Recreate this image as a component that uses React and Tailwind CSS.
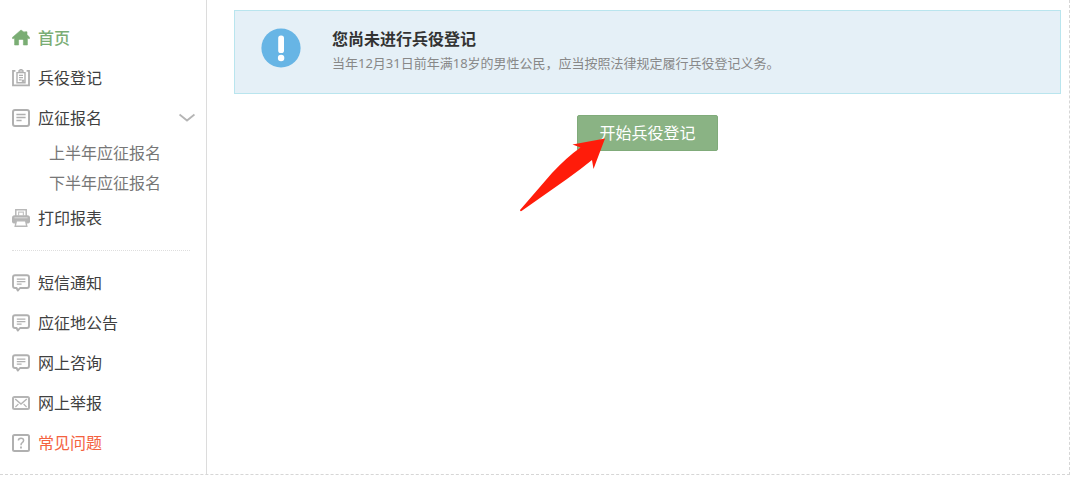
import { useState } from "react";

function HomeIcon() {
  return (
    <svg viewBox="0 0 18 18" className="w-[18px] h-[18px] shrink-0" aria-hidden="true">
      <path
        d="M9 1 L12.4 3.4 V2.8 H15 V5.6 L17.6 8.4 V9.6 H15.4 V16 H11.4 V11.4 Q11.4 10.4 10.4 10.4 H7.6 Q6.6 10.4 6.6 11.4 V16 H2.6 V9.6 H0.4 V8.4 Z"
        fill="#7aad74"
        stroke="#7aad74"
        strokeWidth="0.6"
        strokeLinejoin="round"
      />
    </svg>
  );
}

function RegisterIcon() {
  return (
    <svg viewBox="0 0 18 18" className="w-[18px] h-[18px] shrink-0" fill="none" stroke="#b0b0b0" aria-hidden="true">
      <path d="M3.4 1.8 H1 V16.4 H17 V1.8 H14.6" strokeWidth="1.8" />
      <path d="M5 3.6 H13 V13.8 H5 Z" strokeWidth="1.4" />
      <path d="M7 3.4 V1.6 Q9 -0.4 11 1.6 V3.4 Z" fill="#d4d4d4" strokeWidth="1.3" />
      <path d="M7 6.4 H11 M7 8.6 H11 M7 10.8 H9.6" strokeWidth="1.2" />
      <path d="M9.8 11.8 H12.4" strokeWidth="2.2" />
    </svg>
  );
}

function FormIcon() {
  return (
    <svg viewBox="0 0 18 18" className="w-[18px] h-[18px] shrink-0" fill="none" stroke="#b0b0b0" aria-hidden="true">
      <rect x="1" y="1" width="16" height="16" rx="2" strokeWidth="2" />
      <path d="M4.4 5.5 H13.6 M4.4 8.5 H13.6 M4.4 11.5 H9.6" strokeWidth="1.3" />
    </svg>
  );
}

function PrinterIcon() {
  return (
    <svg viewBox="0 0 18 18" className="w-[18px] h-[18px] shrink-0" fill="none" aria-hidden="true">
      <path d="M3.8 7 V0.8 H14.2 V7" fill="#fff" stroke="#b8b8b8" strokeWidth="1.5" />
      <path d="M6.6 6.4 V3.2 H11.4 V6.4" stroke="#c6c6c6" strokeWidth="1.2" />
      <path d="M2.6 6.2 H15.4 Q18 6.2 18 8.8 V12.6 Q18 14.6 16 14.6 H2 Q0 14.6 0 12.6 V8.8 Q0 6.2 2.6 6.2 Z" fill="#b5b5b5" />
      <path d="M2.4 8.8 H15.6" stroke="#dcdcdc" strokeWidth="1" />
      <path d="M4.4 11.8 H13.6 L14.8 17.2 H3.2 Z" fill="#fff" stroke="#b8b8b8" strokeWidth="1.4" />
    </svg>
  );
}

function MessageIcon() {
  return (
    <svg viewBox="0 0 18 18" className="w-[18px] h-[18px] shrink-0" fill="none" stroke="#b0b0b0" aria-hidden="true">
      <path
        d="M3 1.2 H15 Q17 1.2 17 3.2 V12 Q17 14 15 14 H8 L5.8 16.6 L4.6 14 H3 Q1 14 1 12 V3.2 Q1 1.2 3 1.2 Z"
        strokeWidth="1.9"
        strokeLinejoin="round"
      />
      <path d="M4.8 5.1 H13.4 M4.8 7.6 H13.4 M4.8 10.1 H9.6" strokeWidth="1.2" />
    </svg>
  );
}

function MailIcon() {
  return (
    <svg viewBox="0 0 18 18" className="w-[18px] h-[18px] shrink-0" fill="none" stroke="#b5b5b5" aria-hidden="true">
      <rect x="1" y="3" width="16" height="12" rx="1.5" strokeWidth="2" />
      <path d="M3.2 5 L9 10 L14.8 5" strokeWidth="1.5" />
      <path d="M3.4 13 L6.4 10 M14.6 13 L11.6 10" strokeWidth="1.1" />
    </svg>
  );
}

function QuestionIcon() {
  return (
    <svg viewBox="0 0 18 18" className="w-[18px] h-[18px] shrink-0" fill="none" stroke="#b0b0b0" aria-hidden="true">
      <rect x="1" y="1" width="16" height="16" rx="1.5" strokeWidth="2" />
      <path d="M6.4 6.6 Q6.4 4.2 9 4.2 Q11.6 4.2 11.6 6.4 Q11.6 7.6 10.2 8.6 Q9 9.4 9 11.2" strokeWidth="1.5" />
      <path d="M9 12.6 V14.6" strokeWidth="1.8" />
    </svg>
  );
}

function MenuLink({ icon: Icon, label, className = "text-[#404040]" }) {
  return (
    <a href="#" className={`flex h-10 items-center gap-2 pl-3 text-base ${className}`}>
      <Icon />
      {label}
    </a>
  );
}

const notices = [
  { label: "短信通知", icon: MessageIcon },
  { label: "应征地公告", icon: MessageIcon },
  { label: "网上咨询", icon: MessageIcon },
  { label: "网上举报", icon: MailIcon },
  { label: "常见问题", icon: QuestionIcon, className: "text-[#f4623f]" },
];

function Sidebar() {
  const [open, setOpen] = useState(true);

  return (
    <nav className="w-[207px] shrink-0 border-r border-[#dcdcdc] pt-[18px] pb-[11px]">
      <MenuLink icon={HomeIcon} label="首页" className="font-medium text-[#7aad74]" />
      <MenuLink icon={RegisterIcon} label="兵役登记" />
      <button
        type="button"
        aria-expanded={open}
        onClick={() => setOpen(!open)}
        className="flex h-10 w-full items-center gap-2 pl-3 pr-[11px] text-base text-[#404040]"
      >
        <FormIcon />
        应征报名
        <svg viewBox="0 0 16 10" className="ml-auto h-[10px] w-4" fill="none" aria-hidden="true">
          <path d="M0.5 1.5 L8 7.5 L15.5 1.5" stroke="#b5b5b5" strokeWidth="1.9" />
        </svg>
      </button>
      {open && (
        <div className="pl-[49px] text-base text-[#777]">
          <a href="#" className="flex h-[30px] items-center">上半年应征报名</a>
          <a href="#" className="flex h-[30px] items-center">下半年应征报名</a>
        </div>
      )}
      <MenuLink icon={PrinterIcon} label="打印报表" />
      <hr className="my-3 mr-4 ml-3 border-t border-dotted border-[#dedede]" />
      {notices.map((item) => (
        <MenuLink key={item.label} {...item} />
      ))}
    </nav>
  );
}

export default function App() {
  return (
    <div className="bg-white font-['Noto_Sans','Noto_Sans_CJK_SC',sans-serif]">
      <div className="mr-[10px] flex border-r border-b border-dashed border-[#d6d6d6]">
        <Sidebar />
        <main className="flex flex-1 flex-col items-center pt-[10px] pr-2 pl-[27px]">
          <section className="flex w-full border border-[#b9e5ee] bg-[#e5f0f7] pt-4 pb-[18px] pl-[26px]">
            <svg viewBox="0 0 40 40" className="mt-px h-10 w-10 shrink-0" aria-hidden="true">
              <circle cx="20" cy="20" r="19.6" fill="#67b5e5" />
              <rect x="17.2" y="7.4" width="5.8" height="17.6" rx="2.6" fill="#fff" />
              <circle cx="20.1" cy="30" r="3.2" fill="#fff" />
            </svg>
            <div className="ml-[31px]">
              <h1 className="text-base leading-6 font-bold text-[#333]">您尚未进行兵役登记</h1>
              <p className="text-[13px] leading-6 text-[#888]">
                当年12月31日前年满18岁的男性公民，应当按照法律规定履行兵役登记义务。
              </p>
            </div>
          </section>
          <div className="relative mt-[21px]">
            <button
              type="button"
              className="h-9 rounded-xs border border-[#80ab7a] bg-[#8ab384] px-[21px] text-base text-white"
            >
              开始兵役登记
            </button>
            <svg
              viewBox="0 0 86 74"
              className="pointer-events-none absolute top-[23px] -left-[58px] h-[74px] w-[86px]"
              aria-hidden="true"
            >
              <path
                d="M86 0.5 L53.5 6.5 L61.5 9.5 Q48 19 33 35 L1 72 Q1 73.5 2.5 73 L48 41 Q62 31 73 22 L74.5 31 Z"
                fill="#ff1c0a"
              />
            </svg>
          </div>
        </main>
      </div>
    </div>
  );
}
